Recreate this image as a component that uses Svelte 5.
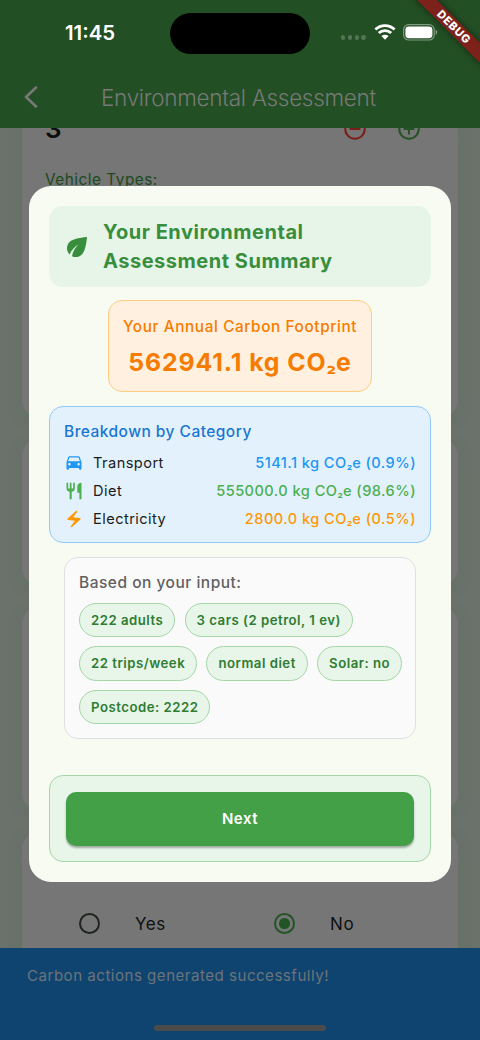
<script lang="ts">
  const icons = {
    car: 'M18.92 5.01C18.72 4.42 18.16 4 17.5 4h-11c-.66 0-1.21.42-1.42 1.01L3 11v8c0 .55.45 1 1 1h1c.55 0 1-.45 1-1v-1h12v1c0 .55.45 1 1 1h1c.55 0 1-.45 1-1v-8l-2.08-5.99zM6.5 15c-.83 0-1.5-.67-1.5-1.5S5.67 12 6.5 12s1.5.67 1.5 1.5S7.33 15 6.5 15zm11 0c-.83 0-1.5-.67-1.5-1.5s.67-1.5 1.5-1.5 1.5.67 1.5 1.5-.67 1.5-1.5 1.5zM5 10l1.5-4.5h11L19 10H5z',
    food: 'M11 9H9V2H7v7H5V2H3v7c0 2.12 1.66 3.84 3.75 3.97V22h2.5v-9.03C11.34 12.84 13 11.12 13 9V2h-2v7zm5-3v8h2.5v8H21V2c-2.76 0-5 2.24-5 4z',
    bolt: 'M14.69 2.21 4.33 11.49c-.64.58-.28 1.65.58 1.73L13 14l-4.85 6.76c-.22.31-.19.74.08 1.01.3.3.77.31 1.08.02l10.36-9.28c.64-.58.28-1.65-.58-1.73L11 10l4.85-6.76c.22-.31.19-.74-.08-1.01-.3-.3-.77-.31-1.08-.02z',
  };

  const breakdown = [
    { name: 'transport', label: 'Transport', icon: icons.car, kg: '5141.1', share: '0.9%' },
    { name: 'diet', label: 'Diet', icon: icons.food, kg: '555000.0', share: '98.6%' },
    { name: 'electricity', label: 'Electricity', icon: icons.bolt, kg: '2800.0', share: '0.5%' },
  ];

  const inputs = [
    '222 adults',
    '3 cars (2 petrol, 1 ev)',
    '22 trips/week',
    'normal diet',
    'Solar: no',
    'Postcode: 2222',
  ];
</script>

{#snippet co2()}CO<span class="two">₂</span>e{/snippet}

<div class="phone">
  <header>
    <div class="status">
      <span class="time">11:45</span>
      <span class="island"></span>
      <div class="signals">
        <span class="dots"><i></i><i></i><i></i><i></i></span>
        <svg class="wifi" viewBox="0 0 22 16" width="22" height="16">
          <path d="M1.4 5.6a13.7 13.7 0 0 1 19.2 0M4.8 9.1a8.8 8.8 0 0 1 12.4 0" />
          <path class="fill" d="M11 15.7 7.4 12.1a5.2 5.2 0 0 1 7.2 0z" />
        </svg>
        <svg class="battery" viewBox="0 0 35 17" width="35" height="17">
          <rect class="outline" x="0.6" y="0.6" width="30.6" height="15.4" rx="5" />
          <rect class="level" x="2.4" y="2.4" width="27" height="11.8" rx="3.4" />
          <path class="tip" d="M32.6 5.6c2.2.8 2.2 4.6 0 5.4z" />
        </svg>
      </div>
    </div>
    <div class="appbar">
      <svg class="back" viewBox="0 0 14 22" width="14" height="22"><path d="M12 1.5 2 11l10 9.5" /></svg>
      <h1>Environmental Assessment</h1>
    </div>
  </header>

  <main>
    <section class="card vehicles">
      <div class="counter">
        <span class="count">3</span>
        <svg class="minus" viewBox="0 0 24 24" width="26" height="26">
          <circle cx="12" cy="12" r="9" /><path d="M7 12h10" />
        </svg>
        <svg class="plus" viewBox="0 0 24 24" width="26" height="26">
          <circle cx="12" cy="12" r="9" /><path d="M7 12h10M12 7v10" />
        </svg>
      </div>
      <p class="types">Vehicle Types:</p>
    </section>
    <section class="card trips"></section>
    <section class="card diet-card"></section>
    <section class="card solar">
      <div class="option"><span class="radio"></span>Yes</div>
      <div class="option"><span class="radio on"></span>No</div>
    </section>
  </main>

  <footer>
    <p>Carbon actions generated successfully!</p>
    <span class="home"></span>
  </footer>

  <div class="dialog">
    <div class="title">
      <svg viewBox="0 0 24 24" width="30" height="30">
        <path d="M6.05 8.05c-2.73 2.73-2.73 7.15-.02 9.88 1.47-3.4 4.09-6.24 7.36-7.93-2.77 2.34-4.71 5.61-5.39 9.32 2.6 1.23 5.8.78 7.95-1.37C19.43 14.47 20 4 20 4S9.53 4.57 6.05 8.05z" />
      </svg>
      <h2>Your Environmental<br />Assessment Summary</h2>
    </div>

    <div class="footprint">
      <span class="caption">Your Annual Carbon Footprint</span>
      <strong>562941.1 kg {@render co2()}</strong>
    </div>

    <div class="breakdown">
      <h3>Breakdown by Category</h3>
      {#each breakdown as row (row.name)}
        <div class="row {row.name}">
          <svg viewBox="0 0 24 24" width="20" height="20"><path d={row.icon} /></svg>
          <span class="label">{row.label}</span>
          <span class="value">{row.kg} kg {@render co2()} ({row.share})</span>
        </div>
      {/each}
    </div>

    <div class="inputs">
      <h3>Based on your input:</h3>
      <div class="chips">
        {#each inputs as input}
          <span class="chip">{input}</span>
        {/each}
      </div>
    </div>

    <div class="actions">
      <button>Next</button>
    </div>
  </div>

  <div class="ribbon">DEBUG</div>
</div>

<style>
  :global(body) {
    margin: 0;
  }
  .phone {
    position: relative;
    width: 480px;
    height: 1040px;
    overflow: hidden;
    display: flex;
    flex-direction: column;
    background: #6a726b;
    font-family: Inter, 'Liberation Sans', sans-serif;
  }
  h1, h2, h3, p {
    margin: 0;
  }
  svg {
    display: block;
    flex-shrink: 0;
  }
  .two {
    font-size: 0.84em;
    letter-spacing: 0;
  }

  header {
    height: 128px;
    flex-shrink: 0;
    background: #234f24;
    z-index: 1;
  }
  .status {
    display: grid;
    grid-template-columns: 170px 140px 1fr;
    height: 66px;
    align-items: center;
  }
  .time {
    padding: 0 0 2px 65px;
    color: #fff;
    font-size: 20.4px;
    font-weight: 600;
    letter-spacing: 0;
  }
  .island {
    height: 41px;
    border-radius: 21px;
    background: #000;
  }
  .signals {
    display: flex;
    align-items: center;
    padding-left: 31px;
  }
  .dots {
    display: flex;
    gap: 2.5px;
    margin: 9px 8px 0 0;
  }
  .dots i {
    width: 4.3px;
    height: 4.3px;
    border-radius: 50%;
    background: #537554;
  }
  .wifi {
    margin: -2px 7.5px 0 0;
  }
  .wifi path {
    fill: none;
    stroke: #fff;
    stroke-width: 2.8;
  }
  .wifi .fill {
    fill: #fff;
    stroke: none;
  }
  .battery {
    margin-top: -1px;
  }
  .outline {
    fill: none;
    stroke: #7f9a80;
    stroke-width: 1.2;
  }
  .level { fill: #fff; }
  .tip { fill: #7f9a80; }

  .appbar {
    display: flex;
    align-items: center;
    height: 62px;
    padding-left: 24px;
  }
  .back path {
    fill: none;
    stroke: #777977;
    stroke-width: 2.6;
    stroke-linecap: round;
    stroke-linejoin: round;
  }
  h1 {
    margin-left: 63px;
    padding-top: 1px;
    color: #777977;
    font-size: 22.5px;
    font-weight: 350;
    letter-spacing: -0.31px;
    white-space: nowrap;
  }

  main {
    flex: 1;
    min-height: 0;
    overflow: hidden;
    display: flex;
    flex-direction: column;
    gap: 24px;
    padding: 0 22px;
  }
  .card {
    flex-shrink: 0;
    border-radius: 15px;
    background: #767676;
    box-shadow: 0 4px 14px rgba(94, 112, 90, 0.45);
  }
  .vehicles {
    height: 288px;
    border-top-left-radius: 0;
    border-top-right-radius: 0;
  }
  .trips { height: 144px; }
  .diet-card { height: 201px; }
  .counter {
    display: flex;
    height: 14px;
    align-items: flex-end;
    padding: 0 36px 0 23px;
  }
  .counter svg {
    fill: none;
    stroke-width: 1.9;
  }
  .count {
    flex: 1;
    color: #0b0d0b;
    font-size: 26px;
    font-weight: 600;
    line-height: 26px;
  }
  .minus { stroke: #7a1f1a; margin-right: 28px; }
  .plus { stroke: #235424; }
  .types {
    padding: 27px 0 0 23px;
    color: #1a4a1d;
    font-size: 15.3px;
    line-height: 22px;
    letter-spacing: 0.53px;
  }
  .solar {
    display: grid;
    grid-template-columns: 195px 1fr;
    height: 140px;
    padding: 80.5px 22px 0 57px;
    box-sizing: border-box;
  }
  .option {
    display: flex;
    align-items: center;
    gap: 35px;
    height: 20px;
    color: #0f110f;
    font-size: 17px;
    letter-spacing: 0.6px;
  }
  .radio {
    display: grid;
    place-items: center;
    box-sizing: border-box;
    width: 21px;
    height: 21px;
    border: 2px solid #20241f;
    border-radius: 50%;
  }
  .radio.on { border-color: #235424; }
  .radio.on::after {
    content: '';
    width: 10.5px;
    height: 10.5px;
    border-radius: 50%;
    background: #235424;
  }

  footer {
    height: 92px;
    flex-shrink: 0;
    display: flex;
    flex-direction: column;
    justify-content: space-between;
    align-items: center;
    box-sizing: border-box;
    padding: 17px 27px 9px;
    background: #0f4470;
    z-index: 1;
  }
  footer p {
    align-self: stretch;
    color: #6c7479;
    font-size: 15.1px;
    line-height: 22px;
    letter-spacing: 0.49px;
  }
  .home {
    width: 172px;
    height: 6px;
    border-radius: 3px;
    background: #4b4b4b;
  }

  .dialog {
    position: absolute;
    top: 186px;
    left: 29px;
    z-index: 2;
    box-sizing: border-box;
    width: 422px;
    height: 695.5px;
    padding: 20px;
    border-radius: 22px;
    background: #f8fbf1;
    display: flex;
    flex-direction: column;
    align-items: center;
  }
  .title {
    display: flex;
    align-items: center;
    gap: 11px;
    box-sizing: border-box;
    width: 100%;
    height: 80.5px;
    padding: 1px 0 0 13px;
    border-radius: 14px;
    background: #e7f4e8;
  }
  .title svg { fill: #388e3c; }
  h2 {
    color: #388e3c;
    font-size: 20px;
    font-weight: 700;
    line-height: 29px;
    letter-spacing: 0.52px;
  }

  .footprint {
    display: flex;
    flex-direction: column;
    align-items: center;
    box-sizing: border-box;
    width: 264px;
    height: 92px;
    margin-top: 13.5px;
    padding-top: 14.5px;
    border: 1.2px solid #ffcc80;
    border-radius: 14px;
    background: #fff0df;
    color: #f57c00;
    white-space: nowrap;
  }
  .caption {
    font-size: 15.3px;
    font-weight: 500;
    line-height: 22px;
    letter-spacing: 0.62px;
  }
  strong {
    margin-top: 7.5px;
    font-size: 24.8px;
    font-weight: 650;
    line-height: 34px;
    letter-spacing: 0.9px;
  }

  .breakdown {
    box-sizing: border-box;
    width: 100%;
    height: 137px;
    margin-top: 14px;
    padding: 14px;
    border: 1.2px solid #90caf9;
    border-radius: 14px;
    background: #e3f1fd;
  }
  h3 {
    font-size: 15.5px;
    font-weight: 500;
    line-height: 22px;
    letter-spacing: 0.5px;
  }
  .breakdown h3 {
    margin-bottom: 5.5px;
    color: #1976d2;
    font-weight: 550;
    letter-spacing: 0.46px;
  }
  .row {
    display: flex;
    align-items: center;
    height: 28px;
    font-size: 14.6px;
    letter-spacing: 0.45px;
  }
  .row svg {
    margin-right: 9px;
    fill: currentColor;
  }
  .label {
    flex: 1;
    color: #1a1c19;
  }
  .value { font-weight: 500; }
  .transport { color: #2196f3; }
  .diet { color: #4caf50; }
  .electricity { color: #ff9800; }

  .inputs {
    box-sizing: border-box;
    width: 352px;
    height: 181.5px;
    margin-top: 14px;
    padding: 14px 12px 14px 14px;
    border: 1.2px solid #e0e0e0;
    border-radius: 14px;
    background: #fafafa;
  }
  .inputs h3 {
    color: #616161;
  }
  .chips {
    display: flex;
    flex-wrap: wrap;
    gap: 9px 9.3px;
    margin-top: 8.5px;
  }
  .chip {
    box-sizing: border-box;
    height: 34.6px;
    padding: 0 11px;
    border: 1.2px solid #a5d6a7;
    border-radius: 18px;
    background: #e8f5e9;
    color: #2e7d32;
    font-size: 13.2px;
    font-weight: 600;
    line-height: 33px;
    letter-spacing: 0.5px;
    white-space: nowrap;
  }

  .actions {
    box-sizing: border-box;
    width: 100%;
    height: 87px;
    margin-top: auto;
    padding: 16px;
    border: 1.2px solid #a5d6a7;
    border-radius: 14px;
    background: #e8f5e9;
  }
  button {
    display: block;
    width: 100%;
    height: 54px;
    border: 0;
    border-radius: 10px;
    background: #43a047;
    box-shadow: 0 2px 2px rgba(0, 0, 0, 0.3);
    color: #fff;
    font: 600 15px Inter, sans-serif;
    letter-spacing: 0.5px;
  }

  .ribbon {
    position: absolute;
    top: 19.5px;
    right: -48.5px;
    z-index: 3;
    width: 150px;
    height: 14px;
    transform: rotate(45deg);
    background: #7c221b;
    box-shadow: 0 0 7px rgba(0, 0, 0, 0.5);
    color: #fff;
    font-size: 11.2px;
    font-weight: 800;
    line-height: 14px;
    letter-spacing: 0.7px;
    text-align: center;
  }
</style>
